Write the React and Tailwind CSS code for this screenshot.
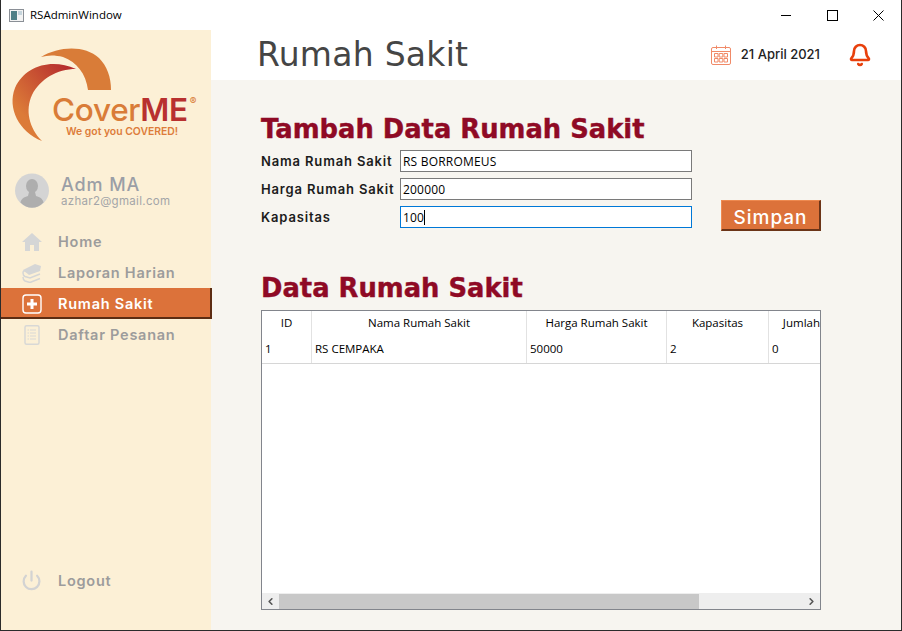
import { Bell, ChevronLeft, ChevronRight, Power } from 'lucide-react';

const HEADING_FONT = "font-['Inter','DejaVu_Sans',sans-serif]";
const WIDE_FONT = "font-['DejaVu_Sans','Inter',sans-serif]";
const TABLE_FONT = "font-['Open_Sans','Noto_Sans',sans-serif]";

const NAV_ITEMS = [
  { label: 'Home', icon: <HomeIcon /> },
  { label: 'Laporan Harian', icon: <BooksIcon /> },
  { label: 'Rumah Sakit', icon: <PlusBoxIcon />, active: true },
  { label: 'Daftar Pesanan', icon: <ListIcon /> },
];

const COLUMNS = [
  { title: 'ID', value: '1', width: 'w-[50px]' },
  { title: 'Nama Rumah Sakit', value: 'RS CEMPAKA', width: 'w-[215px]' },
  { title: 'Harga Rumah Sakit', value: '50000', width: 'w-[140px]' },
  { title: 'Kapasitas', value: '2', width: 'w-[102px]' },
  { title: 'Jumlah', value: '0', width: 'w-[52px]', last: true },
];

export default function App() {
  return (
    <div className="flex h-[631px] w-[902px] flex-col overflow-hidden border border-t-0 border-[#2b2b2b] bg-white">
      <TitleBar />
      <div className="flex min-h-0 flex-1">
        <Sidebar />
        <main className="flex min-w-0 flex-1 flex-col bg-[#f7f5f0]">
          <Header />
          <Content />
        </main>
      </div>
    </div>
  );
}

function TitleBar() {
  return (
    <div className={`flex h-[30px] shrink-0 items-center bg-white pl-[8px] text-[11.5px] text-black ${TABLE_FONT}`}>
      <svg width="15" height="13" viewBox="0 0 15 13" className="mr-[6px]">
        <rect x="0.5" y="0.5" width="14" height="12" fill="#f3f3f3" stroke="#8a8f96" />
        <rect x="2" y="2" width="6" height="9" fill="#4f7f86" />
        <rect x="9" y="2" width="4" height="4" fill="#c5d4dc" />
      </svg>
      <span>RSAdminWindow</span>
      <div className="ml-auto flex h-full items-center">
        <span className="flex w-[46px] justify-center">
          <svg width="10" height="10" viewBox="0 0 10 10"><path d="M0 5.5 H10" stroke="#000" /></svg>
        </span>
        <span className="flex w-[46px] justify-center">
          <svg width="11" height="11" viewBox="0 0 11 11"><rect x="0.5" y="0.5" width="10" height="10" fill="none" stroke="#000" /></svg>
        </span>
        <span className="flex w-[46px] justify-center">
          <svg width="11" height="11" viewBox="0 0 11 11"><path d="M0.5 0.5 L10.5 10.5 M10.5 0.5 L0.5 10.5" stroke="#000" /></svg>
        </span>
      </div>
    </div>
  );
}

function Sidebar() {
  return (
    <aside className={`flex w-[210px] shrink-0 flex-col bg-[#fcf0d6] ${HEADING_FONT}`}>
      <Logo />
      <div className="mt-[29px] flex items-center pl-[14px]">
        <Avatar />
        <div className="ml-[12px]">
          <div className="text-[18px] leading-[20px] font-medium tracking-[0.9px] text-[#9a9ea6]">Adm MA</div>
          <div className="text-[11.5px] leading-[12px] tracking-[0.3px] text-[#a3a5a8]">azhar2@gmail.com</div>
        </div>
      </div>
      <nav className="mt-[18px] flex flex-col">
        {NAV_ITEMS.map((item) => (
          <NavItem key={item.label} {...item} />
        ))}
      </nav>
      <div className="mt-auto mb-[34px]">
        <NavItem label="Logout" icon={<Power size={21} strokeWidth={2.6} color="#d3d3d3" />} />
      </div>
    </aside>
  );
}

function NavItem({ label, icon, active }) {
  return (
    <div
      className={`flex h-[31px] items-center pl-[20px] text-[14.5px] font-semibold tracking-[0.75px] ${
        active ? 'relative mr-[-1px] border-r-2 border-b-2 border-[#5c2c12] bg-[#dc723a] pt-[3px] text-white' : 'text-[#9c9c9c]'
      }`}
    >
      <span className="flex w-[21px] justify-center">{icon}</span>
      <span className="ml-[16px]">{label}</span>
    </div>
  );
}

function Logo() {
  return (
    <div className="relative mt-[18px] h-[96px] w-[210px] shrink-0">
      <svg width="210" height="96" viewBox="0 0 210 96" className="absolute top-0 left-0">
        <defs>
          <linearGradient id="swoosh" x1="0" y1="1" x2="1" y2="0">
            <stop offset="0.25" stopColor="#dc7b38" />
            <stop offset="0.9" stopColor="#b72f2e" />
          </linearGradient>
        </defs>
        <path d="M40 9 C58 -2 84 -3 98 10 C106 18 110 29 110 42 L87 42 C85 26 76 14 62 9 C54 7 47 7 40 9 Z" fill="#d97c38" />
        <path d="M75 21 C50 10 24 18 14 40 C6 60 18 84 41 93 C28 80 24 62 31 47 C39 31 56 21 75 21 Z" fill="url(#swoosh)" />
      </svg>
      <div className="absolute top-[47px] left-[51px] flex text-[31.5px] leading-[30px] font-medium tracking-[-0.3px] text-[#d97c38]">
        <span>Cover</span>
        <span className="font-semibold text-[#b8302f]">ME</span>
        <span className="ml-[2px] text-[10px] leading-[12px] text-[#d97c38]">®</span>
      </div>
      <div className="absolute top-[77px] left-[65px] text-[10.4px] leading-[13px] font-semibold whitespace-nowrap text-[#dd7c3a]">
        We got you COVERED!
      </div>
    </div>
  );
}

function Avatar() {
  return (
    <svg width="34" height="35" viewBox="0 0 34 35" className="shrink-0">
      <circle cx="17" cy="17.5" r="17" fill="#d4d4d4" />
      <ellipse cx="17" cy="13" rx="6" ry="7" fill="#aeaeae" />
      <path d="M14 19 L20 19 L21 23 C25 24 28 26 28.5 29.5 C22 36.5 12 36.5 5.5 29.5 C6 26 9 24 13 23 Z" fill="#aeaeae" />
    </svg>
  );
}

function HomeIcon() {
  return (
    <svg width="20" height="18" viewBox="0 0 20 18">
      <path d="M10 0 L20 9 L17 9 L17 18 L12 18 L12 12 L8 12 L8 18 L3 18 L3 9 L0 9 Z" fill="#d5d6d6" />
    </svg>
  );
}

function BooksIcon() {
  return (
    <svg width="20" height="20" viewBox="0 0 20 20" fill="none">
      <path d="M1 7 L13 1 L19 3 L18 8 L7 12 Z" fill="#d5d6d6" />
      <path d="M1 10 C1 8 2 7.5 3 8 L8 10 L18 7 M1 10 C1 12 2 13 3 13.5 L8 15 L18 11 M1 14 C1 16 2 17.5 3 18 L8 19.5 L18 15.5" stroke="#d5d6d6" strokeWidth="1.5" />
    </svg>
  );
}

function PlusBoxIcon() {
  return (
    <svg width="20" height="20" viewBox="0 0 20 20" fill="none">
      <rect x="1" y="1" width="18" height="18" rx="3" stroke="#fff" strokeWidth="1.4" />
      <path d="M10 5 V15 M5 10 H15" stroke="#fff" strokeWidth="3" />
    </svg>
  );
}

function ListIcon() {
  return (
    <svg width="16" height="20" viewBox="0 0 16 20" fill="none" stroke="#d8d8d6">
      <rect x="1" y="0.8" width="14" height="18.4" rx="1.5" strokeWidth="1.5" />
      <path d="M6 5 H12 M6 8 H12 M6 11 H12 M6 14 H12 M3.5 5 H5 M3.5 8 H5 M3.5 11 H5 M3.5 14 H5" strokeWidth="1" />
    </svg>
  );
}

function CalendarIcon() {
  return (
    <svg width="20" height="20" viewBox="0 0 20 20" fill="none" stroke="#f08a68" className="ml-auto">
      <rect x="0.5" y="2.5" width="19" height="17" rx="1.5" />
      <path d="M0.5 6.5 H19.5 M5.5 0.5 V4 M14.5 0.5 V4" />
      <path d="M3.5 8.5 H7 V12 H3.5 Z M8.2 8.5 H11.8 V12 H8.2 Z M13 8.5 H16.5 V12 H13 Z M3.5 13.5 H7 V17 H3.5 Z M8.2 13.5 H11.8 V17 H8.2 Z M13 13.5 H16.5 V17 H13 Z" />
    </svg>
  );
}

function Header() {
  return (
    <header className={`flex h-[50px] shrink-0 items-center bg-white pr-[29px] pl-[46px] ${HEADING_FONT}`}>
      <h1 className={`text-[33px] tracking-[0.25px] text-[#454545] ${WIDE_FONT}`}>Rumah Sakit</h1>
      <CalendarIcon />
      <span className="ml-[10px] text-[13px] font-medium text-[#222]">21 April 2021</span>
      <Bell size={24} strokeWidth={2.6} color="#e8400c" className="ml-[28px]" />
    </header>
  );
}

function Content() {
  return (
    <div className={`flex min-h-0 flex-1 flex-col pt-[30px] pr-[80px] pb-[20px] pl-[50px] ${HEADING_FONT}`}>
      <SectionTitle>Tambah Data Rumah Sakit</SectionTitle>
      <div className="mt-[4px] flex items-end">
        <div className="grid grid-cols-[139px_292px] items-center gap-y-[6px]">
          <FormRow label="Nama Rumah Sakit" value="RS BORROMEUS" />
          <FormRow label="Harga Rumah Sakit" value="200000" />
          <FormRow label="Kapasitas" value="100" focused />
        </div>
        <button
          type="button"
          className="mb-[-3px] ml-[29px] h-[31px] w-[101px] border-t border-l border-r-2 border-b-2 border-t-[#ee8a50] border-l-[#ee8a50] border-r-[#6b3418] border-b-[#6b3418] bg-[#dc723a] pt-[3px] text-[19px] font-medium tracking-[1px] text-white"
        >
          Simpan
        </button>
      </div>
      <SectionTitle className="mt-[41px]">Data Rumah Sakit</SectionTitle>
      <DataTable />
    </div>
  );
}

function SectionTitle({ children, className = '' }) {
  return (
    <h2 className={`h-[36px] pt-px text-[25.8px] leading-[36px] font-bold whitespace-nowrap text-[#8f0a25] [-webkit-text-stroke:0.4px_#8f0a25] ${WIDE_FONT} ${className}`}>
      {children}
    </h2>
  );
}

function FormRow({ label, value, focused }) {
  return (
    <>
      <label className="pt-px text-[13px] font-semibold tracking-[0.85px] whitespace-nowrap text-[#1c1c1c]">{label}</label>
      <div
        className={`flex h-[22px] items-center border bg-white pt-px pl-[2px] text-[12px] tracking-[0.2px] text-black ${TABLE_FONT} ${
          focused ? 'border-[#0078d7]' : 'border-[#7a7a7a]'
        }`}
      >
        {value}
        {focused && <span className="h-[15px] w-px bg-black" />}
      </div>
    </>
  );
}

function DataTable() {
  return (
    <div className={`mt-[5px] flex h-[301px] flex-col border border-[#82858c] bg-white text-[11.5px] text-black ${TABLE_FONT}`}>
      <div className="min-h-0 flex-1">
        <div className="flex border-b border-[#d6d6d6]">
          {COLUMNS.map((col) => (
            <div key={col.title} className={`${col.width} shrink-0 ${col.last ? '' : 'border-r border-[#e2e2e2]'}`}>
              <div className={`flex h-[26px] items-center pb-[2px] whitespace-nowrap ${col.last ? 'justify-end pr-px' : 'justify-center'}`}>{col.title}</div>
              <div className="flex h-[26px] items-center pb-[2px] pl-[3px]">{col.value}</div>
            </div>
          ))}
        </div>
      </div>
      <div className="flex h-[16px] shrink-0 items-center bg-[#eeeeee]">
        <span className="flex w-[17px] justify-center"><ChevronLeft size={11} strokeWidth={3.5} color="#555" /></span>
        <div className="h-[15px] w-[420px] bg-[#c8c8c8]" />
        <span className="ml-auto flex w-[17px] justify-center"><ChevronRight size={11} strokeWidth={3.5} color="#555" /></span>
      </div>
    </div>
  );
}
